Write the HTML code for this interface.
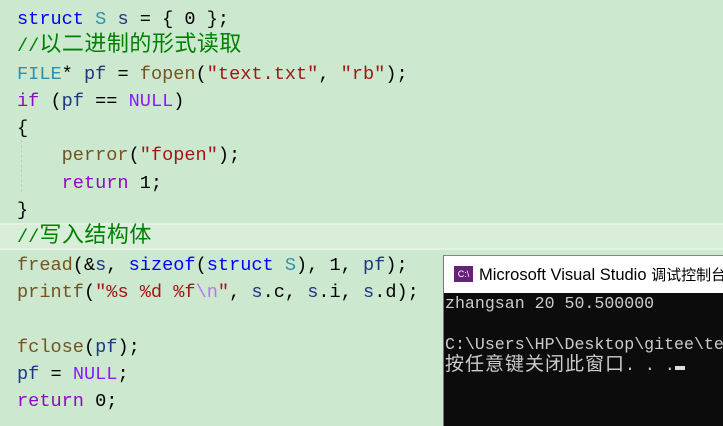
<!DOCTYPE html>
<html><head><meta charset="utf-8"><style>
html,body{margin:0;width:723px;height:426px;overflow:hidden}
body{background:#cce8cf;position:relative;font-family:"Liberation Mono","Noto Sans CJK SC",monospace;}
.cur{position:absolute;left:0;top:223px;width:723px;height:27px;background:#d9eed9;border-top:2px solid #e4f3e4;border-bottom:2px solid #e4f3e4;box-sizing:border-box}
.code{position:absolute;left:17px;top:6px;font-size:18.6px;line-height:27.3px;white-space:pre;color:#000}
.cj{font-family:"Noto Sans CJK SC",sans-serif;font-size:22px;line-height:0;letter-spacing:0.5px}
.k{color:#0000ff}.t{color:#2b91af}.c{color:#008000}.f{color:#74531f}.s{color:#a31515}.v{color:#1f377f}.m{color:#8a1bff}.r{color:#8f08c4}.e{color:#b776fb}
.guide{position:absolute;left:21px;top:140px;height:52px;border-left:1px dashed #b8d0ba}
.win{position:absolute;left:443px;top:255px;width:290px;height:180px;background:#0c0c0c;border-left:1px solid #777;border-top:1px solid #888}
.title{height:37px;background:#fff;position:relative;font-family:"Liberation Sans","Noto Sans CJK SC",sans-serif;font-size:16.5px;color:#000;white-space:nowrap}
.title span{position:absolute;left:35px;top:8px}
.title b{font-weight:normal;font-size:15px}
.icon{position:absolute;left:10px;top:10px;width:19px;height:16px;background:#68217a;color:#fff;font-size:9px;line-height:16px;text-align:center;font-family:"Liberation Sans",sans-serif}
.con{position:absolute;left:1px;top:38px;font-size:16.6px;line-height:20.5px;color:#cccccc;white-space:pre}
.cc{font-family:"Noto Sans CJK SC",sans-serif;font-size:19px;line-height:0;letter-spacing:1px}
.cursor{display:inline-block;width:10px;height:4px;background:#ddd;vertical-align:baseline}
</style></head><body>
<div class="cur"></div>
<div class="guide"></div>
<div class="code"><span class="k">struct</span> <span class="t">S</span> <span class="v">s</span> = { 0 };
<span class="c">//<span class="cj">以二进制的形式读取</span></span>
<span class="t">FILE</span>* <span class="v">pf</span> = <span class="f">fopen</span>(<span class="s">"text.txt"</span>, <span class="s">"rb"</span>);
<span class="r">if</span> (<span class="v">pf</span> == <span class="m">NULL</span>)
{
    <span class="f">perror</span>(<span class="s">"fopen"</span>);
    <span class="r">return</span> 1;
}
<span class="c">//<span class="cj">写入结构体</span></span>
<span class="f">fread</span>(&amp;<span class="v">s</span>, <span class="k">sizeof</span>(<span class="k">struct</span> <span class="t">S</span>), 1, <span class="v">pf</span>);
<span class="f">printf</span>(<span class="s">"%s %d %f</span><span class="e">\n</span><span class="s">"</span>, <span class="v">s</span>.c, <span class="v">s</span>.i, <span class="v">s</span>.d);

<span class="f">fclose</span>(<span class="v">pf</span>);
<span class="v">pf</span> = <span class="m">NULL</span>;
<span class="r">return</span> 0;</div>
<div class="win">
<div class="title"><div class="icon">C:\</div><span>Microsoft Visual Studio <b>调试控制台</b></span></div>
<div class="con">zhangsan 20 50.500000

C:\Users\HP\Desktop\gitee\test
<span class="cc">按任意键关闭此窗口</span>. . .<span class="cursor"></span></div>
</div>
</body></html>
